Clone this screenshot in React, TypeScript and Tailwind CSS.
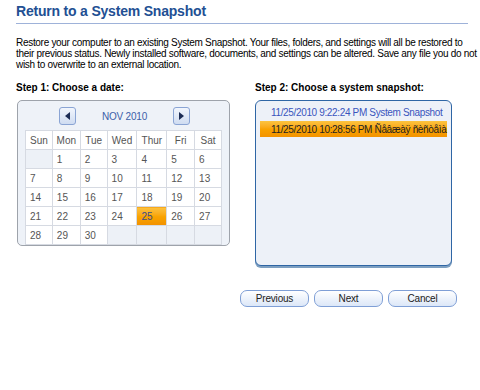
import React from 'react';

const FONT = { fontFamily: '"Liberation Sans", Arial, sans-serif' };

const DAYS = ['Sun', 'Mon', 'Tue', 'Wed', 'Thur', 'Fri', 'Sat'];
const COL_W = ['w-[27px]', 'w-[28px]', 'w-[27px]', 'w-[30px]', 'w-[30px]', 'w-[28px]', 'w-[27px]'];

// Nov 2010 starts on a Monday
const WEEKS: (number | null)[][] = [
  [null, 1, 2, 3, 4, 5, 6],
  [7, 8, 9, 10, 11, 12, 13],
  [14, 15, 16, 17, 18, 19, 20],
  [21, 22, 23, 24, 25, 26, 27],
  [28, 29, 30, null, null, null, null],
];

const NavButton: React.FC<{ dir: 'left' | 'right' }> = ({ dir }) => (
  <button className="w-[17px] h-[18px] rounded-[3px] border border-[#8aa4d4] bg-gradient-to-b from-[#f2f6fd] to-[#cfdcf1] flex items-center justify-center">
    <svg width="5" height="8" viewBox="0 0 5 8">
      {dir === 'left' ? <path d="M5 0 L0 4 L5 8 Z" fill="#1c2c55" /> : <path d="M0 0 L5 4 L0 8 Z" fill="#1c2c55" />}
    </svg>
  </button>
);

const Calendar: React.FC = () => (
  <div className="w-[213px] h-[146px] rounded-[5px] border border-[#9ea3ab] bg-[#eef2f8] px-[7px] pt-[6px]">
    <div className="flex items-center h-[18px]">
      <div className="w-[34px]" />
      <NavButton dir="left" />
      <div className="flex-1 text-center text-[10px] tracking-[-0.2px] text-[#3c5ea8]">NOV 2010</div>
      <NavButton dir="right" />
      <div className="w-[32px]" />
    </div>
    <table className="mt-[5px] border-collapse text-[10px] text-[#555]">
      <thead>
        <tr>
          {DAYS.map((d, i) => (
            <th key={d} className={`${COL_W[i]} h-[19px] border border-[#d6dae2] bg-white font-normal text-center`}>
              {d}
            </th>
          ))}
        </tr>
      </thead>
      <tbody>
        {WEEKS.map((w, wi) => (
          <tr key={wi}>
            {w.map((d, i) => {
              if (d === null) {
                return <td key={i} className="h-[19px] border border-[#d6dae2] bg-[#edf1f7]" />;
              }
              if (d === 25) {
                return (
                  <td
                    key={i}
                    className="h-[19px] border border-[#d6dae2] bg-gradient-to-b from-[#fcc23c] via-[#f9a400] to-[#f29100] pl-[4px] text-[#3b4b88]"
                  >
                    {d}
                  </td>
                );
              }
              return (
                <td key={i} className="h-[19px] border border-[#d6dae2] bg-white pl-[4px]">
                  {d}
                </td>
              );
            })}
          </tr>
        ))}
      </tbody>
    </table>
  </div>
);

const SnapshotList: React.FC = () => (
  <div className="w-[197px] h-[166px] rounded-[6px] border border-[#2f66a5] bg-[#edf1f8] shadow-[0_2px_0_#7d9fc1] px-[4px] pt-[3px] text-[10px] tracking-[-0.35px]">
    <div className="h-[17px] flex items-center pl-[11px] text-[#3a55bd] whitespace-nowrap">11/25/2010 9:22:24 PM System Snapshot</div>
    <div className="h-[16px] flex items-center pl-[11px] text-[#222] whitespace-nowrap bg-gradient-to-b from-[#fcc43f] via-[#f9a300] to-[#f39300]">
      11/25/2010 10:28:56 PM Ñåâæàÿ ñèñòåìà
    </div>
  </div>
);

const WizardButton: React.FC<{ label: string }> = ({ label }) => (
  <button className="w-[69px] h-[17px] rounded-[7px] border border-[#7f9fd6] bg-gradient-to-b from-white to-[#dce7f8] text-[10px] tracking-[-0.2px] text-[#222] leading-none">
    {label}
  </button>
);

export default function App() {
  return (
    <div className="w-[480px] h-[390px] bg-white pl-[16px] pt-[3px] text-black" style={FONT}>
      <h1 className="text-[14px] font-bold text-[#224f93] leading-[16px] tracking-[-0.2px]">Return to a System Snapshot</h1>
      <div className="mt-[4px] w-[452px] h-px bg-[#9eb2d9]" />
      <p className="mt-[13px] w-[464px] text-[10px] leading-[11px] tracking-[-0.3px] whitespace-nowrap">
        Restore your computer to an existing System Snapshot. Your files, folders, and settings will all be restored to
        <br />
        their previous status. Newly installed software, documents, and settings can be altered. Save any file you do not
        <br />
        wish to overwrite to an external location.
      </p>
      <div className="mt-[11px] flex">
        <div className="w-[239px]">
          <div className="text-[10px] font-bold h-[13px] leading-[13px]">Step 1: Choose a date:</div>
          <div className="mt-[6px] ml-px">
            <Calendar />
          </div>
        </div>
        <div>
          <div className="text-[10px] font-bold h-[13px] leading-[13px]">Step 2: Choose a system snapshot:</div>
          <div className="mt-[6px]">
            <SnapshotList />
          </div>
        </div>
      </div>
      <div className="mt-[24px] w-[441px] flex justify-end gap-[5px]">
        <WizardButton label="Previous" />
        <WizardButton label="Next" />
        <WizardButton label="Cancel" />
      </div>
    </div>
  );
}
